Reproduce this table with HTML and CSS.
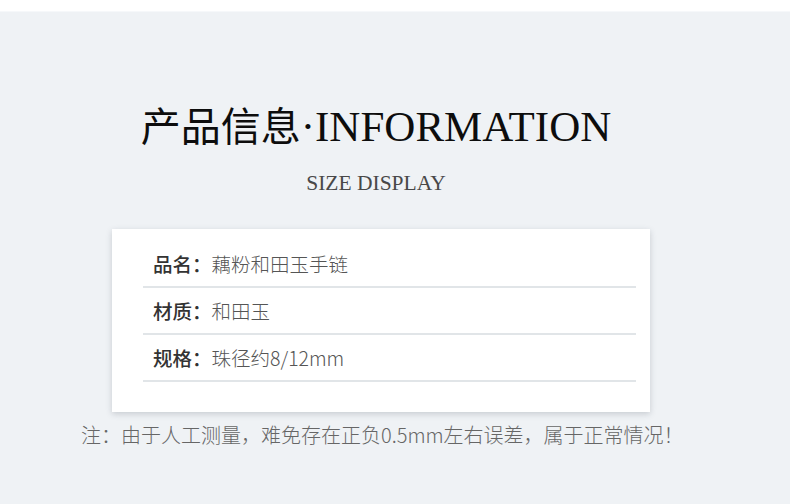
FILE: index.html
```html
<!DOCTYPE html>
<html lang="zh-CN">
<head>
<meta charset="utf-8">
<link rel="stylesheet" href="styles.css">
</head>
<body>
<div class="top-band"></div>
<main class="main">
  <h1 class="title"><span class="title-cn">产品信息</span><span class="title-en">·INFORMATION</span></h1>
  <p class="subtitle">SIZE DISPLAY</p>
  <section class="card">
    <div class="row"><span class="label">品名：</span><span class="value">藕粉和田玉手链</span></div>
    <div class="row"><span class="label">材质：</span><span class="value">和田玉</span></div>
    <div class="row"><span class="label">规格：</span><span class="value">珠径约8/12mm</span></div>
  </section>
  <p class="note">注：由于人工测量，难免存在正负0.5mm左右误差，属于正常情况！</p>
</main>
</body>
</html>
```
FILE: styles.css
```css
html, body {
  margin: 0;
  padding: 0;
}
body {
  width: 790px;
  height: 504px;
  background: #eff2f5;
  font-family: "Noto Sans CJK SC", "Noto Sans", sans-serif;
  overflow: hidden;
}
.top-band {
  height: 11px;
  background: #ffffff;
  border-bottom: 1px solid #f6f8fa;
}
.main {
  padding-top: 87px;
}
.title {
  width: 752px;
  margin: 0;
  text-align: center;
  line-height: 50px;
  font-weight: 400;
  color: #0d0d0d;
  white-space: nowrap;
}
.title-cn {
  font-family: "Noto Sans CJK SC", sans-serif;
  font-size: 40px;
  font-weight: 400;
}
.title-en {
  font-family: "Liberation Serif", "Times New Roman", serif;
  font-size: 43px;
}
.subtitle {
  width: 752px;
  margin: 16px 0 0;
  text-align: center;
  line-height: 30px;
  font-family: "Liberation Serif", "Times New Roman", serif;
  font-size: 21.5px;
  color: #484848;
}
.card {
  margin: 31px 0 0 112px;
  width: 538px;
  box-sizing: border-box;
  padding: 12px 14px 30px 31px;
  background: #ffffff;
  box-shadow: 0 2px 6px rgba(60, 70, 80, 0.22);
}
.row {
  height: 47px;
  box-sizing: border-box;
  display: flex;
  align-items: center;
  padding: 0 0 0 10px;
  border-bottom: 2px solid #e1e5e8;
  font-size: 19.5px;
  line-height: 26px;
}
.label {
  color: #333333;
  font-weight: 500;
}
.value {
  color: #555555;
  font-weight: 300;
}
.note {
  margin: 8px 0 0 81px;
  line-height: 30px;
  font-size: 20px;
  color: #666666;
  font-weight: 300;
  white-space: nowrap;
}
```
